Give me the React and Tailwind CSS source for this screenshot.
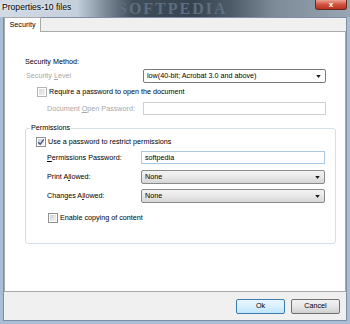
import { useState } from "react";

const ui = "font-['Liberation_Sans',Arial,sans-serif]";

function Check({ checked, disabled }) {
  return (
    <span
      className={`flex h-[10px] w-[10px] shrink-0 items-center justify-center border p-px ${
        disabled ? "border-[#b4b4b4] bg-white" : "border-[#8e8f8f] bg-white"
      }`}
    >
      <span
        className={`relative block h-full w-full bg-gradient-to-br ${
          disabled ? "from-[#d8d8d8] to-[#f2f2f2]" : "from-[#cbcfd5] to-[#f6f6f6]"
        }`}
      >
        {checked && (
          <svg viewBox="0 0 8 8" className="absolute left-[-1px] top-[-1px] h-[8px] w-[8px]">
            <path d="M1.2 4.2 L3.2 6.3 L6.8 1.3" fill="none" stroke="#3b4f86" strokeWidth="1.3" />
          </svg>
        )}
      </span>
    </span>
  );
}

function Arrow() {
  return (
    <svg viewBox="0 0 6 4" className="h-[3px] w-[5px]">
      <path d="M0 0 H6 L3 4 Z" fill="#1a1a1a" />
    </svg>
  );
}

function Select({ value, flat, w }) {
  return (
    <div
      className={`flex h-[14px] items-center justify-between rounded-[2px] border pl-[3px] pr-[4px] ${w} ${
        flat
          ? "border-[#7a7a7a] bg-white"
          : "border-[#8a8a8a] bg-gradient-to-b from-[#f3f3f3] via-[#e8e8e8] to-[#d6d6d6]"
      }`}
    >
      <span className="text-[7.2px] leading-none text-black">{value}</span>
      <Arrow />
    </div>
  );
}

function Field({ value, focus, w }) {
  return (
    <div
      className={`flex h-[13px] items-center border bg-white pl-[3px] ${w} ${
        focus ? "border-[#a9c9e8]" : "border-[#d0d0d0]"
      }`}
    >
      <span className="text-[7.2px] leading-none text-black">{value}</span>
    </div>
  );
}

function Label({ children, w, gray, ml }) {
  return (
    <span
      className={`shrink-0 text-[7.2px] leading-none ${w} ${ml} ${
        gray ? "text-[#a7a7a7]" : "text-black"
      }`}
    >
      {children}
    </span>
  );
}

function Button({ children, primary }) {
  return (
    <div
      className={`flex h-[15px] w-[49px] items-center justify-center rounded-[2px] border ${
        primary
          ? "border-[#3d7bad] bg-gradient-to-b from-[#eaf6fd] via-[#d9effc] to-[#bee6fd]"
          : "border-[#707070] bg-gradient-to-b from-[#f2f2f2] via-[#e6e6e6] to-[#d0d0d0]"
      }`}
    >
      <span className="text-[7.2px] leading-none text-black">{children}</span>
    </div>
  );
}

export default function App() {
  const [allowCopy, setAllowCopy] = useState(false);
  return (
    <div className={`${ui} flex h-[324px] w-[350px] flex-col overflow-hidden bg-[#a9bdd5]`}>
      {/* title bar */}
      <div className="relative flex h-[17px] shrink-0 items-start overflow-hidden bg-[linear-gradient(90deg,#d3dce6_0%,#c3cfdb_22%,#7d8b99_30%,#3f4d5b_38%,#36434f_55%,#4d5b68_66%,#7c8996_78%,#98a5b2_100%)]">
        <span className="ml-[2px] mt-[2px] text-[8.6px] leading-[10px] text-black [text-shadow:0_0_3px_#fff]">
          Properties-10 files
        </span>
        <span className="absolute left-[118px] top-0 font-['Liberation_Serif',serif] text-[16px] font-bold leading-[17px] tracking-[2px] text-[#5d6e80]">
          SOFTPEDIA
        </span>
        <div className="absolute right-[3px] top-0 flex h-[10px] w-[32px] items-center justify-center rounded-b-[3px] border border-t-0 border-[#6b2b22] bg-gradient-to-b from-[#e8a494] via-[#d0533f] to-[#b8321f]">
          <span className="text-[8px] font-bold leading-none text-white">x</span>
        </div>
      </div>

      {/* client area */}
      <div className="mx-[3px] flex flex-1 flex-col border border-[#7d8fa5] bg-[#f0f0f0]">
        {/* tab strip */}
        <div className="flex h-[14px] shrink-0 items-end border-b border-[#a9a9a9] bg-[#f0f0f0]">
          <div className="mb-[-1px] flex h-[15px] w-[37px] items-center justify-center border border-b-0 border-[#a9a9a9] bg-white">
            <span className="text-[7.2px] leading-none text-black">Security</span>
          </div>
        </div>

        {/* page */}
        <div className="flex flex-1 flex-col border-x border-b border-[#a9a9a9] bg-white">
          <div className="ml-[20px] mt-[25px] flex h-[10px] items-center">
            <Label>Security Method:</Label>
          </div>

          <div className="mt-[2px] flex h-[14px] items-center">
            <Label gray ml="ml-[21px]" w="w-[117px]">
              Security <span className="underline">L</span>evel
            </Label>
            <Select flat value="low(40-bit; Acrobat 3.0 and above)" w="w-[183px]" />
          </div>

          <div className="mt-[3px] flex h-[11px] items-center gap-[2px] pl-[32px]">
            <Check disabled />
            <Label>Require a password to open the document</Label>
          </div>

          <div className="mt-[5px] flex h-[13px] items-center">
            <Label gray ml="ml-[42px]" w="w-[96px]">
              Document <span className="underline">O</span>pen Password:
            </Label>
            <Field value="" w="w-[183px]" />
          </div>

          <fieldset className="ml-[20px] mt-[8px] w-[311px] rounded-[3px] border border-[#d5dfe5] pb-[20px]">
            <legend className="ml-[4px] h-[10px] px-px text-[7.2px] leading-[10px] text-black">Permissions</legend>

            <div className="mt-[4px] flex h-[10px] items-center gap-[2px] pl-[10px]">
              <Check checked />
              <Label>Use a password to restrict permissions</Label>
            </div>

            <div className="mt-[4px] flex h-[13px] items-center">
              <Label ml="ml-[21px]" w="w-[94px]">
                <span className="underline">P</span>ermissions Password:
              </Label>
              <Field focus value="softpedia" w="w-[184px]" />
            </div>

            <div className="mt-[6px] flex h-[14px] items-center">
              <Label ml="ml-[21px]" w="w-[94px]">
                Print A<span className="underline">l</span>lowed:
              </Label>
              <Select value="None" w="w-[184px]" />
            </div>

            <div className="mt-[5px] flex h-[14px] items-center">
              <Label ml="ml-[21px]" w="w-[94px]">
                Changes A<span className="underline">l</span>lowed:
              </Label>
              <Select value="None" w="w-[184px]" />
            </div>

            <div
              className="mt-[10px] flex h-[10px] items-center gap-[2px] pl-[22px]"
              onClick={() => setAllowCopy(!allowCopy)}
            >
              <Check checked={allowCopy} />
              <Label>Enable copying of content</Label>
            </div>
          </fieldset>
        </div>

        {/* buttons */}
        <div className="flex h-[28px] shrink-0 items-center justify-end gap-[6px] pr-[6px]">
          <Button primary>Ok</Button>
          <Button>Cancel</Button>
        </div>
      </div>
      <div className="h-[3px] shrink-0" />
    </div>
  );
}
